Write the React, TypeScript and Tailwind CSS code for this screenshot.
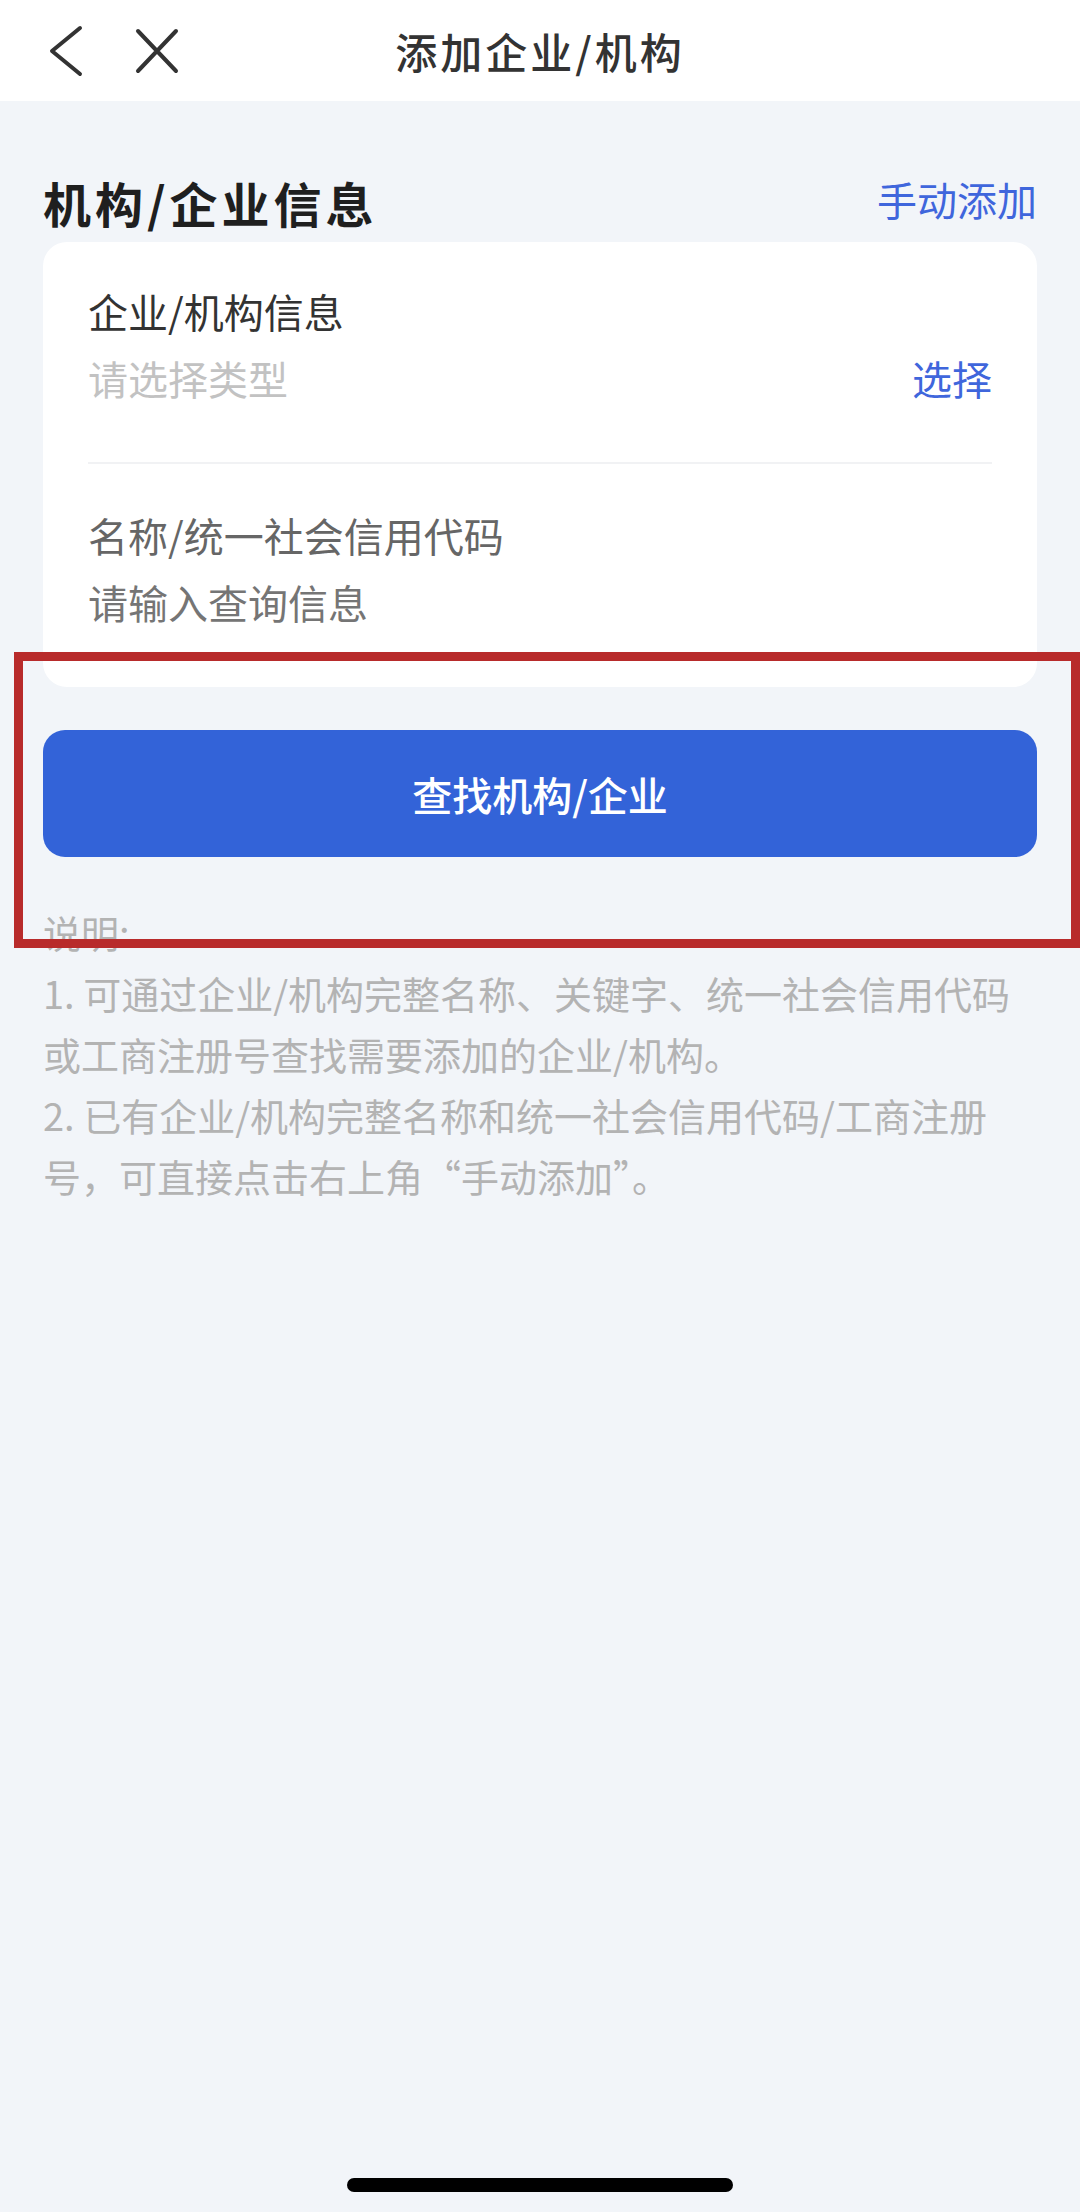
import React from "react";

function BackIcon() {
  return (
    <svg width="34" height="52" viewBox="0 0 34 52" fill="none">
      <path d="M31 3 L3 26 L31 49" stroke="#333" strokeWidth="4" strokeLinecap="round" strokeLinejoin="round" />
    </svg>
  );
}

function CloseIcon() {
  return (
    <svg width="44" height="46" viewBox="0 0 44 46" fill="none">
      <path d="M3 3 L41 43 M41 3 L3 43" stroke="#333" strokeWidth="4" strokeLinecap="round" />
    </svg>
  );
}

const notes = [
  "1. 可通过企业/机构完整名称、关键字、统一社会信用代码",
  "或工商注册号查找需要添加的企业/机构。",
  "2. 已有企业/机构完整名称和统一社会信用代码/工商注册",
  "号，可直接点击右上角“手动添加”。",
];

export default function App() {
  return (
    <div className="relative flex min-h-[2212px] w-[1080px] flex-col bg-[#f2f5f9] font-['Noto_Sans_CJK_SC',sans-serif]">
      {/* nav bar */}
      <header className="grid h-[101px] grid-cols-[1fr_auto_1fr] items-center bg-white">
        <div className="flex items-center gap-[52px] pl-[49px]">
          <BackIcon />
          <CloseIcon />
        </div>
        <h1 className="text-[42px] leading-none font-medium tracking-[3px] text-[#333]">添加企业/机构</h1>
        <div />
      </header>

      <main className="px-[43px]">
        <div className="flex items-start justify-between pt-[77px]">
          <h2 className="text-[48px] leading-none font-bold tracking-[4px] text-[#1f1f1f]">机构/企业信息</h2>
          <button className="mt-[1px] text-[40px] leading-none text-[#3f66dc]">手动添加</button>
        </div>

        <div className="mt-[16px] h-[445px] rounded-[24px] bg-white px-[45px] pt-[49px]">
          <div className="text-[40px] leading-none text-[#333]">企业/机构信息</div>
          <div className="mt-[27px] flex items-center justify-between">
            <span className="text-[40px] leading-none text-[#c2c2c2]">请选择类型</span>
            <span className="text-[40px] leading-none text-[#3f66dc]">选择</span>
          </div>
          <div className="mt-[64px] h-[2px] bg-[#f1f2f4]" />
          <div className="mt-[51px] text-[40px] leading-none text-[#666]">名称/统一社会信用代码</div>
          <div className="mt-[27px] text-[40px] leading-none text-[#757575]">请输入查询信息</div>
        </div>

        <button className="mt-[43px] flex h-[127px] w-full items-center justify-center rounded-[22px] bg-[#3363d8] text-[40px] font-medium text-white">
          查找机构/企业
        </button>

        <div className="mt-[44px] text-[38px] leading-[61px] text-[#b3b3b3]">
          <div>说明:</div>
          {notes.map((line, i) => (
            <div key={i} className="whitespace-nowrap">{line}</div>
          ))}
        </div>
      </main>

      {/* highlight annotation */}
      <div className="pointer-events-none absolute top-[652px] left-[14px] h-[296px] w-[1066px] border-[9px] border-[#b82b2b]" />

      <div className="mt-auto flex justify-center pb-[20px]">
        <div className="h-[14px] w-[386px] rounded-full bg-black" />
      </div>
    </div>
  );
}
